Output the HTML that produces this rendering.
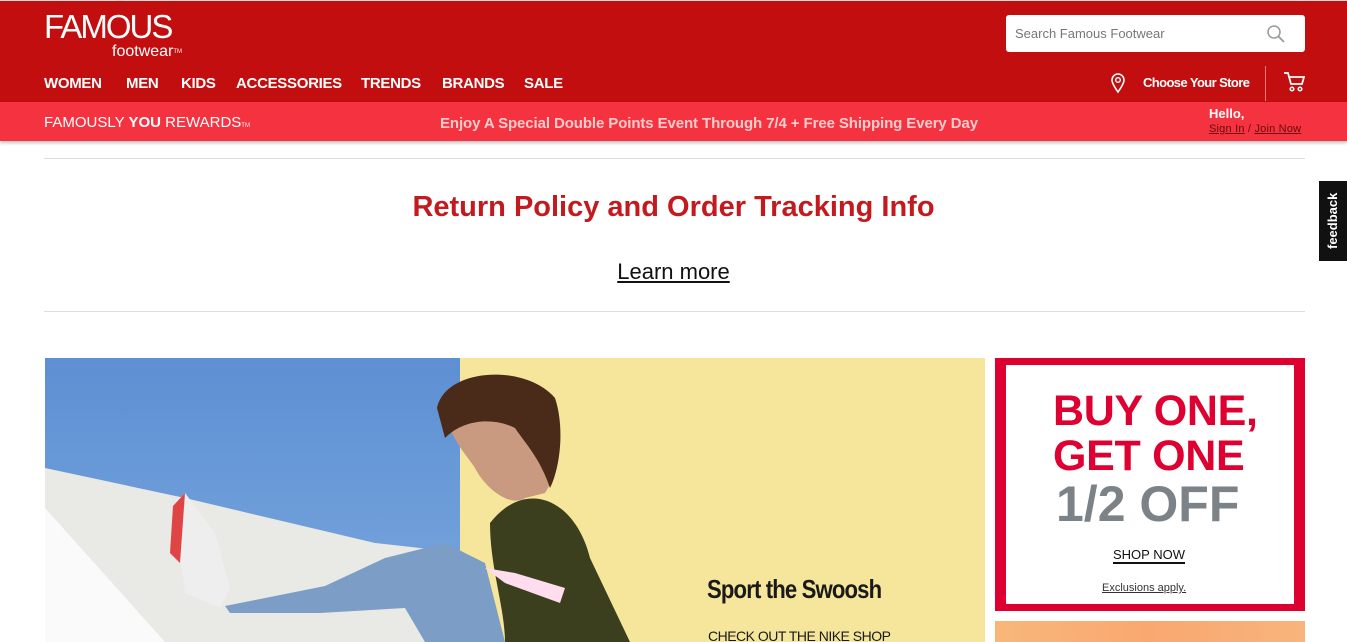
<!DOCTYPE html>
<html><head><meta charset="utf-8"><style>
*{margin:0;padding:0;box-sizing:border-box}
body{width:1347px;height:642px;overflow:hidden;background:#fff;font-family:"Liberation Sans",sans-serif;position:relative}
.abs{position:absolute}
.hdr{left:0;top:0;width:1347px;height:102px;background:#c20e0e;border-top:1px solid #ddd}
.nav span{position:absolute;top:75px;color:#fff;font-weight:bold;font-size:15px;letter-spacing:-.3px}
.bar{left:0;top:102px;width:1347px;height:39px;background:#f53340;box-shadow:0 2px 3px rgba(0,0,0,.25)}
</style></head><body>
<div class="abs hdr"></div>
<div class="abs" style="left:44px;top:10px;color:#fff;font-size:33px;letter-spacing:-2px;line-height:34px">FAMOUS</div>
<div class="abs" style="left:112px;top:43px;color:#fff;font-size:16px;line-height:18px">footwear<span style="font-size:6px;vertical-align:top">TM</span></div>
<div class="nav">
<span style="left:44px">WOMEN</span><span style="left:126px">MEN</span><span style="left:181px">KIDS</span><span style="left:236px">ACCESSORIES</span><span style="left:361px">TRENDS</span><span style="left:442px">BRANDS</span><span style="left:524px">SALE</span>
</div>
<div class="abs" style="left:1006px;top:15px;width:299px;height:37px;background:#fff;border-radius:3px"></div>
<div class="abs" style="left:1015px;top:26px;color:#777;font-size:13px">Search Famous Footwear</div>
<svg class="abs" style="left:1266px;top:24px" width="20" height="20"><circle cx="8" cy="8" r="6" fill="none" stroke="#999" stroke-width="1.5"/><line x1="12.5" y1="12.5" x2="18" y2="18" stroke="#999" stroke-width="1.8"/></svg>
<svg class="abs" style="left:1110px;top:72px" width="16" height="22"><path d="M8 20C3 13 2 10 2 8a6 6 0 0 1 12 0c0 2-1 5-6 12z" fill="none" stroke="#fff" stroke-width="1.6"/><circle cx="8" cy="8" r="2.3" fill="none" stroke="#fff" stroke-width="1.4"/></svg>
<div class="abs" style="left:1143px;top:75px;color:#fff;font-weight:bold;font-size:13px;letter-spacing:-.6px">Choose Your Store</div>
<div class="abs" style="left:1265px;top:66px;width:1px;height:35px;background:#e77"></div>
<svg class="abs" style="left:1283px;top:71px" width="22" height="22"><path d="M1 2h4l3 11h11l2-7H7" fill="none" stroke="#fff" stroke-width="1.8"/><circle cx="9" cy="18" r="1.8" fill="none" stroke="#fff" stroke-width="1.5"/><circle cx="17" cy="18" r="1.8" fill="none" stroke="#fff" stroke-width="1.5"/></svg>
<div class="abs bar"></div>
<div class="abs" style="left:44px;top:114px;color:#fff;font-size:15px">FAMOUSLY <b>YOU</b> REWARDS<span style="font-size:6px">TM</span></div>
<div class="abs" style="left:440px;top:115px;color:#fcc;font-weight:bold;font-size:15px;letter-spacing:-.1px">Enjoy A Special Double Points Event Through 7/4 + Free Shipping Every Day</div>
<div class="abs" style="left:1209px;top:106px;color:#fff;font-weight:bold;font-size:13px">Hello,</div>
<div class="abs" style="left:1209px;top:123px;color:#6a0a0a;font-size:11px;letter-spacing:.2px"><u>Sign In</u> / <u>Join Now</u></div>
<div class="abs" style="left:44px;top:158px;width:1261px;height:1px;background:#ddd"></div>
<div class="abs" style="left:0;top:191px;width:1347px;text-align:center;color:#c21a1f;font-weight:bold;font-size:29px">Return Policy and Order Tracking Info</div>
<div class="abs" style="left:0;top:259px;width:1347px;text-align:center;color:#111;font-size:22px"><u>Learn more</u></div>
<div class="abs" style="left:44px;top:311px;width:1261px;height:1px;background:#ddd"></div>
<div class="abs" style="left:1319px;top:181px;width:28px;height:80px;background:#111"></div>
<div class="abs" style="left:1325px;top:188px;color:#fff;font-weight:bold;font-size:13px;writing-mode:vertical-rl;transform:rotate(180deg);height:66px;text-align:center">feedback</div>
<!-- hero -->
<div class="abs" style="left:45px;top:358px;width:940px;height:284px;overflow:hidden;background:linear-gradient(180deg,#5d8fd3,#7aa8de)">
<div class="abs" style="left:415px;top:0;width:525px;height:284px;background:#f5e69b"></div>
<svg class="abs" style="left:0;top:0" width="940" height="284"><path d="M0 110 L140 140 L330 185 L420 195 L420 284 L0 284Z" fill="#e9e9e6"/><path d="M0 150 L120 284 L0 284Z" fill="#fafafa"/>
<path d="M395 45 C410 20 470 15 505 55 C515 100 510 120 500 135 L480 140 C465 150 440 130 430 110 C420 95 405 80 395 45Z" fill="#c99a80"/>
<path d="M392 50 C400 10 480 5 510 40 C520 70 515 110 505 130 C495 100 480 85 470 70 C450 60 420 60 400 80Z" fill="#4a2a18"/>
<path d="M445 165 C480 120 530 140 545 200 L585 284 L460 284 C460 250 445 210 445 165Z" fill="#3c3f1e"/>
<path d="M180 248 L280 228 L340 200 L400 185 L440 205 L460 284 L380 284 L360 250 L275 255 L185 255Z" fill="#7c9ec6"/>
<path d="M128 148 L140 135 L170 175 L185 230 L175 250 L140 235Z" fill="#eee"/><path d="M128 148 L140 135 L135 205 L125 195Z" fill="#e04545"/>
<path d="M440 210 L470 215 L520 230 L515 245 L460 225Z" fill="#fde"/>
</svg>
<div class="abs" style="left:662px;top:216px;color:#1a1a1a;font-weight:bold;font-size:26px;letter-spacing:-1px;transform:scaleX(.85);transform-origin:left">Sport the Swoosh</div>
<div class="abs" style="left:663px;top:270px;color:#1a1a1a;font-size:14px;letter-spacing:-.5px">CHECK OUT THE NIKE SHOP</div>
</div>
<!-- promo -->
<div class="abs" style="left:995px;top:358px;width:310px;height:253px;background:#de0031"></div>
<div class="abs" style="left:1006px;top:365px;width:288px;height:239px;background:#fff"></div>
<div class="abs" style="left:1053px;top:389px;color:#de0031;font-weight:bold;font-size:43px;line-height:45px;letter-spacing:-.3px">BUY ONE,<br>GET ONE</div>
<div class="abs" style="left:1056px;top:476px;color:#7b8288;font-weight:bold;font-size:50px;line-height:56px">1/2 OFF</div>
<div class="abs" style="left:1113px;top:547px;color:#111;font-size:13px;border-bottom:2px solid #111;line-height:15px">SHOP NOW</div>
<div class="abs" style="left:1102px;top:582px;color:#333;font-size:11px;text-decoration:underline">Exclusions apply.</div>
<div class="abs" style="left:995px;top:621px;width:310px;height:21px;background:linear-gradient(90deg,#f8b77a,#f9a870,#f7b47c)"></div>
</body></html>
